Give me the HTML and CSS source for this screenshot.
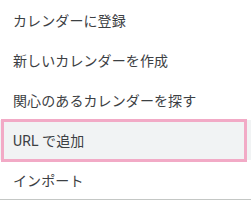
FILE: index.html
```html
<!DOCTYPE html>
<html lang="ja">
<head>
    <meta charset="UTF-8">
    <meta name="viewport" content="width=device-width, initial-scale=1.0">
    <title>他のカレンダー</title>
    <link rel="stylesheet" href="styles.css">
</head>
<body>
    <ul class="menu">
        <li class="menu-item">カレンダーに登録</li>
        <li class="menu-item">新しいカレンダーを作成</li>
        <li class="menu-item">関心のあるカレンダーを探す</li>
        <li class="menu-item menu-item-focused">URL で追加</li>
        <li class="menu-item">インポート</li>
    </ul>
</body>
</html>
```

FILE: styles.css
```css
:root {
    --text-color: #3c4043;
    --hover-bg: #f1f3f4;
    --focus-color: #f2aac6;
    --divider-color: #c4c7c5;
}

* {
    box-sizing: border-box;
    margin: 0;
    padding: 0;
}

body {
    font-family: Roboto, "Noto Sans CJK JP", sans-serif;
    background-color: #ffffff;
    color: var(--text-color);
    width: 251px;
    height: 201px;
    overflow: hidden;
}

.menu {
    list-style: none;
    border-bottom: 1px solid var(--divider-color);
    width: 251px;
}

.menu-item {
    position: relative;
    display: flex;
    align-items: center;
    height: 40px;
    padding-left: 13px;
    font-size: 14px;
    letter-spacing: 0.1px;
}

.menu-item:last-child {
    height: 39px;
}

.menu-item-focused {
    background-color: var(--hover-bg);
}

.menu-item-focused::after {
    content: "";
    position: absolute;
    top: -1px;
    bottom: -2px;
    left: 1px;
    right: 4px;
    border: 3px solid var(--focus-color);
}
```
